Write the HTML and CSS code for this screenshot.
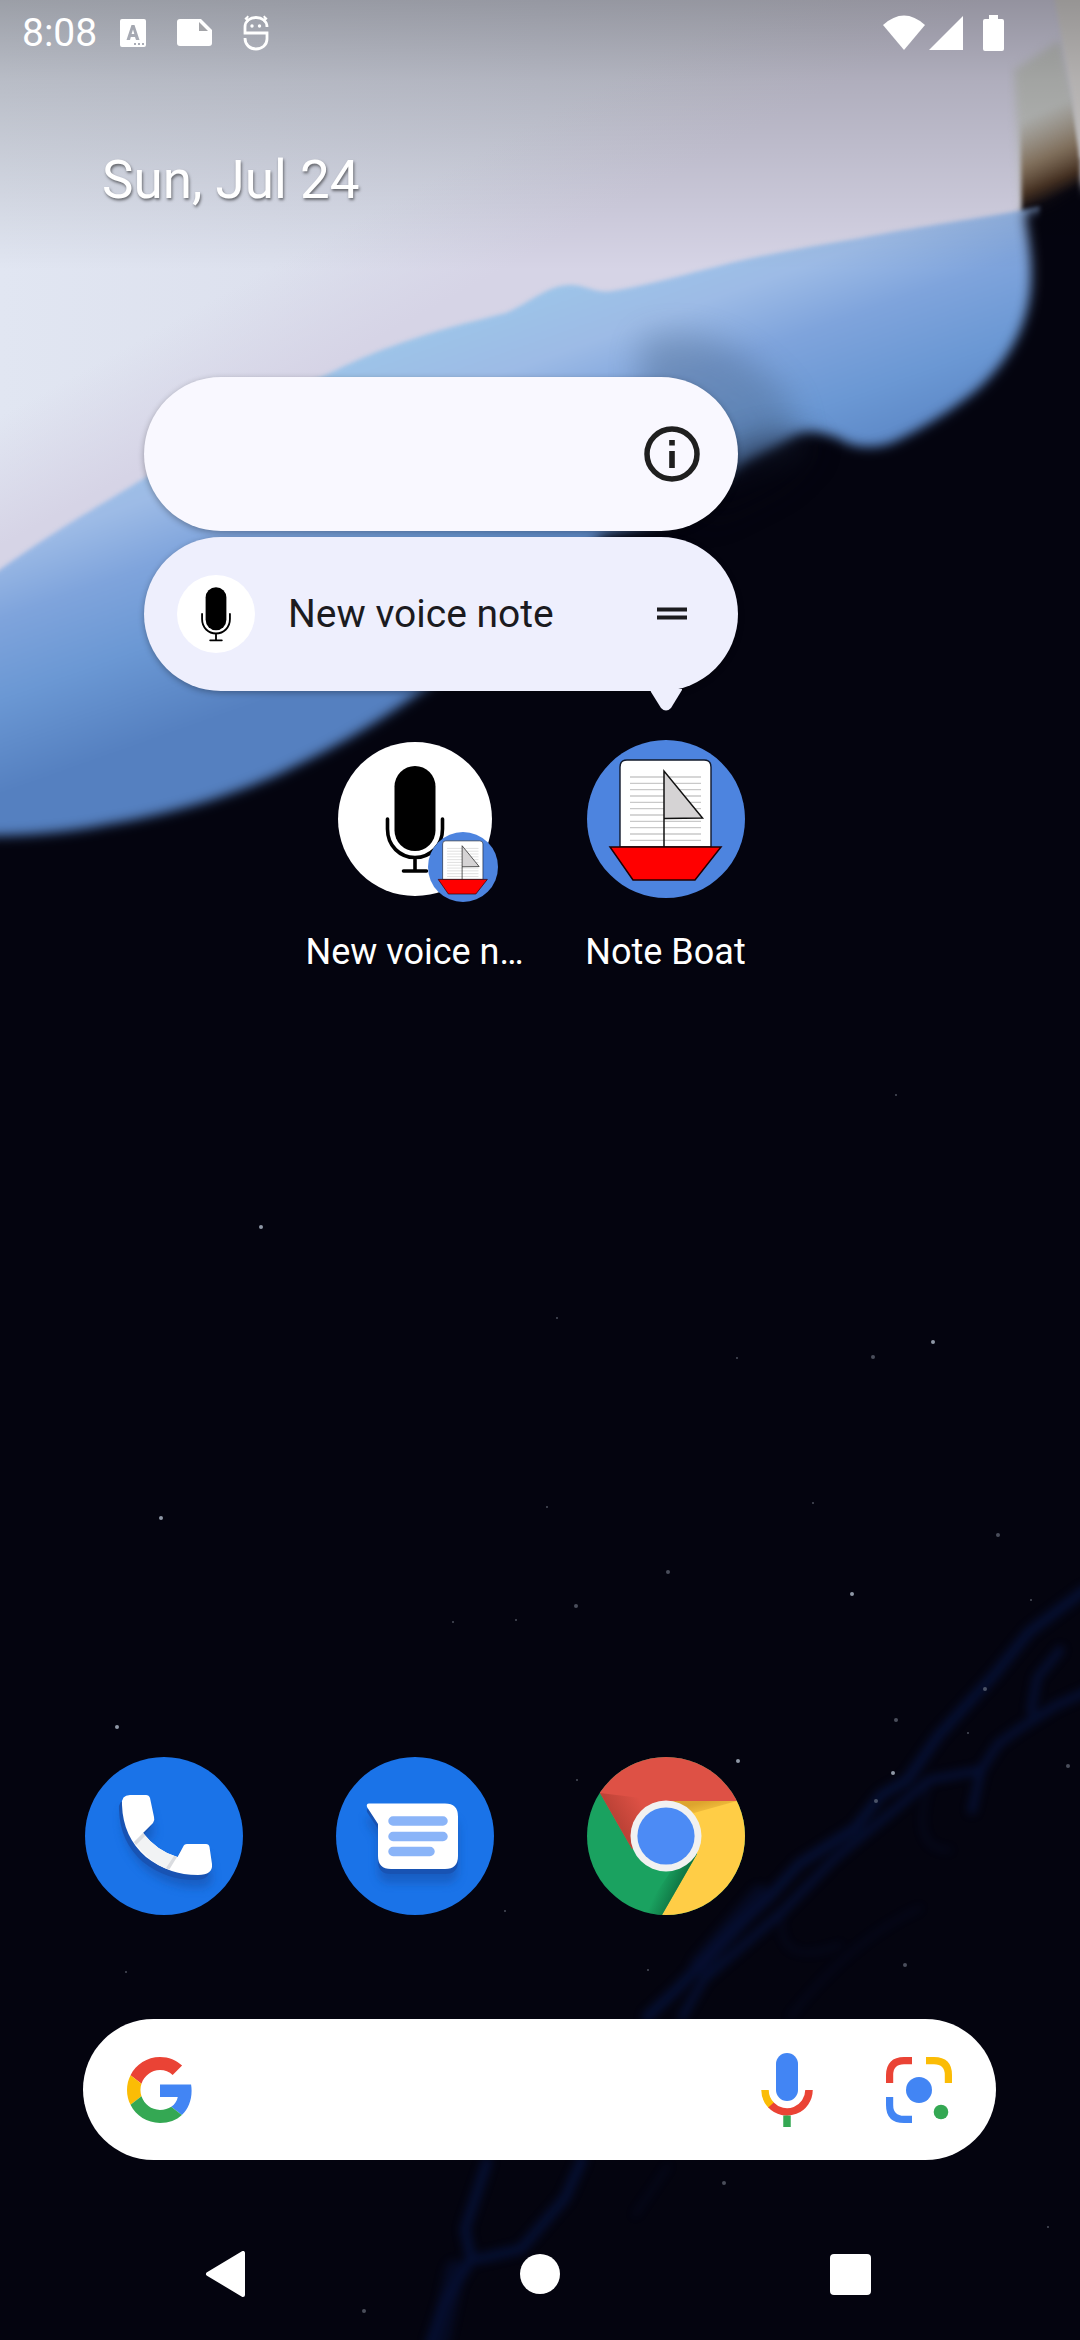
FILE: index.html
```html
<!DOCTYPE html>
<html lang="en">
<head>
<meta charset="utf-8">
<meta name="viewport" content="width=device-width, initial-scale=1">
<title>Home screen</title>
<link rel="stylesheet" href="styles.css">
</head>
<body>
<svg class="wallpaper" viewBox="0 0 1080 2340" preserveAspectRatio="xMidYMin slice" aria-hidden="true">
  <defs>
    <linearGradient id="sky" x1="0" y1="0" x2="1" y2="0">
      <stop offset="0" stop-color="#e1e6f2"/><stop offset=".5" stop-color="#d9dcea"/><stop offset="1" stop-color="#d6d5e2"/>
    </linearGradient>
    <linearGradient id="haze" gradientUnits="userSpaceOnUse" x1="120" y1="350" x2="175" y2="450">
      <stop offset="0" stop-color="#d6d4e6" stop-opacity="0"/><stop offset="1" stop-color="#d6d4e6"/>
    </linearGradient>
    <linearGradient id="wave" gradientUnits="userSpaceOnUse" x1="480" y1="320" x2="576" y2="590">
      <stop offset="0" stop-color="#9dc3e8"/><stop offset=".2" stop-color="#9dbbe6"/><stop offset=".42" stop-color="#7fa4dc"/><stop offset=".68" stop-color="#6b98d4"/><stop offset="1" stop-color="#5580c0"/>
    </linearGradient>
    <linearGradient id="smoke" gradientUnits="userSpaceOnUse" x1="1028" y1="118" x2="1062" y2="196">
      <stop offset="0" stop-color="#8a7358" stop-opacity="0"/><stop offset=".5" stop-color="#7d6347" stop-opacity=".75"/><stop offset=".8" stop-color="#4a3424"/><stop offset="1" stop-color="#0c0a12"/>
    </linearGradient>
    <linearGradient id="scrim" x1="0" y1="0" x2="0" y2="1">
      <stop offset="0" stop-color="#000" stop-opacity=".31"/><stop offset=".3" stop-color="#000" stop-opacity=".18"/><stop offset="1" stop-color="#000" stop-opacity="0"/>
    </linearGradient>
    <filter id="soft2" x="-10%" y="-10%" width="120%" height="120%" color-interpolation-filters="sRGB"><feGaussianBlur stdDeviation="2"/></filter>
    <filter id="soft3" x="-10%" y="-10%" width="120%" height="120%" color-interpolation-filters="sRGB"><feGaussianBlur stdDeviation="4"/></filter>
    <filter id="soft6" x="-10%" y="-10%" width="120%" height="120%" color-interpolation-filters="sRGB"><feGaussianBlur stdDeviation="6"/></filter>
    <filter id="soft12" x="-60%" y="-60%" width="220%" height="220%" color-interpolation-filters="sRGB"><feGaussianBlur stdDeviation="16"/></filter>
  </defs>
  <rect width="1080" height="2340" fill="#04040f"/>
  <rect width="1080" height="600" fill="url(#sky)"/>
  <rect width="1080" height="600" fill="url(#haze)"/>
  <path d="M1014 70L1060 40L1080 120V220H1022Z" fill="#c6c8c6" filter="url(#soft3)"/>
  <path d="M1020 90L1067 76L1080 150V222H1022Z" fill="url(#smoke)" filter="url(#soft2)"/>
  <path d="M1052 -15H1100V158L1080 158L1073 100Z" fill="#dad7d6" filter="url(#soft2)"/>
  <path d="M-20 584C60 526 90 512 138 482C210 438 270 398 324 376C360 358 380 350 413 339C450 326 480 320 506 313C522 306 535 296 551 289C562 285 569 284 580 286C592 289 600 293 613 291C650 285 690 273 723 265C770 253 815 246 861 238C920 226 970 220 1040 207V860H-20Z" fill="url(#wave)" filter="url(#soft2)"/>
  <path d="M1025 212C1026 232 1032 246 1031 282C1029 340 990 382 964 400C940 418 915 432 902 438C882 450 855 450 838 438C820 432 806 428 790 438C770 450 755 456 742 464C730 474 715 490 700 504C680 524 630 528 603 535C540 590 500 640 413 697C370 728 330 750 275 776C220 800 160 816 110 824C60 834 20 836 -30 836V900H1120V168L1082 184L1048 206Z" fill="#04040f" filter="url(#soft6)"/>
  <path d="M640 340C700 320 750 350 790 400L800 450L700 480L640 440Z" fill="#3c5470" opacity=".3" filter="url(#soft12)"/>
  <path d="M720 460C750 440 780 430 815 444L780 480L700 520Z" fill="#04040f" opacity=".5" filter="url(#soft12)"/>
  <rect y="850" width="1080" height="1490" fill="#04040f"/>
  <g fill="none" stroke="#061136" stroke-linecap="round" stroke-linejoin="round" filter="url(#soft3)" opacity=".9">
    <path d="M1085 1590L1029 1632L994 1675L938 1736L907 1780L881 1795L855 1828L799 1864L769 1897L730 1933L677 1989L647 2017" stroke-width="10"/>
    <path d="M1090 1690L1055 1706L1020 1728L998 1744L981 1770L972 1810M1031 1711L1037 1678L1060 1650M981 1770L929 1780L894 1810L834 1859L782 1912L704 1979L682 2017" stroke-width="8"/>
    <path d="M582 2160L565 2198L521 2249L478 2259M487 2162L465 2229L471 2259L443 2305L430 2345" stroke-width="10"/>
    <path d="M930 1780Q908 1850 950 1850M782 1912Q775 1970 840 1945M920 1908Q850 1940 790 2017M668 2166L635 2215" stroke-width="3" opacity=".6"/>
    <path d="M455 2270L440 2340M760 1895L700 1965" stroke-width="20" opacity=".6"/>
  </g>
  <g fill="#8f98a6">
    <circle cx="261" cy="1227" r="2"/><circle cx="161" cy="1518" r="2"/><circle cx="852" cy="1594" r="2"/><circle cx="117" cy="1727" r="2"/><circle cx="738" cy="1761" r="2"/><circle cx="933" cy="1342" r="2"/><circle cx="893" cy="1773" r="2"/>
    <g opacity=".5">
      <circle cx="873" cy="1357" r="2"/><circle cx="737" cy="1358" r="1"/><circle cx="998" cy="1535" r="2"/><circle cx="813" cy="1503" r="1"/><circle cx="668" cy="1572" r="2"/><circle cx="576" cy="1606" r="2"/><circle cx="896" cy="1720" r="2"/><circle cx="985" cy="1689" r="2"/><circle cx="1068" cy="1766" r="2"/><circle cx="1031" cy="1600" r="1"/><circle cx="968" cy="1733" r="1"/><circle cx="876" cy="1801" r="2"/><circle cx="905" cy="1965" r="2"/><circle cx="724" cy="2183" r="2"/><circle cx="516" cy="1620" r="1"/><circle cx="453" cy="1622" r="1"/><circle cx="577" cy="1780" r="1"/><circle cx="505" cy="1911" r="1"/><circle cx="648" cy="1970" r="1"/><circle cx="1048" cy="2227" r="1"/><circle cx="364" cy="2311" r="2"/><circle cx="557" cy="1318" r="1"/><circle cx="896" cy="1095" r="1"/><circle cx="126" cy="1972" r="1"/><circle cx="547" cy="1507" r="1"/>
    </g>
  </g>
  <rect width="1080" height="270" fill="url(#scrim)"/>
</svg>

<svg class="symbols" aria-hidden="true">
  <symbol id="boat" viewBox="0 0 158 158">
    <circle cx="79" cy="79" r="79" fill="#4d84df"/>
    <path d="M33 107V27Q33 20 40 20H117Q124 20 124 27V107Z" fill="#fff" stroke="#10182a" stroke-width="1.4"/>
    <path d="M43 37H114M43 43.400H114M43 49.700H114M43 56H114M43 62.400H114M43 68.700H114M43 75H114M43 81.400H114M43 87.700H114M43 94H114M43 100.400H114" stroke="#c9c9c9" stroke-width="1.300"/>
    <path d="M77 107V31L115.500 78L77 78.500" fill="#d5d3d4" stroke="#111" stroke-width="1.500"/>
    <path d="M23 107H134L108 140H46Z" fill="#f00" stroke="#200" stroke-width="1.500"/>
  </symbol>
  <symbol id="voice" viewBox="2 2 154 154">
    <circle cx="79" cy="79" r="77" fill="#fff"/>
    <rect x="58.500" y="26" width="41" height="85" rx="20.500"/>
    <path d="M51.500 79V89C51.500 106 64 117.500 79 117.500S106.500 106 106.500 89V79M79 118V131M67.500 131H90.500" fill="none" stroke="#000" stroke-width="3.600" stroke-linecap="round"/>
  </symbol>
</svg>

<div class="screen">
  <header class="status">
    <span class="clock">8:08</span>
    <svg width="26" height="28" viewBox="0 0 26 28"><path fill="#fff" fill-rule="evenodd" d="M2 0H24Q26 0 26 2V26Q26 28 24 28H2Q0 28 0 26V2Q0 0 2 0ZM11.500 6L6.500 21H10L10.800 18H15L16 21H19.500L14.500 6ZM13 10.500L14.300 15H11.600ZM14 24V26H16V24ZM18 24V26H20V24ZM22 24V26H24V24Z"/></svg>
    <svg class="note" width="35" height="28" viewBox="0 0 35 28"><path fill="#fff" d="M3 0H24L35 11V24Q35 27 32 27H3Q0 27 0 24V3Q0 0 3 0Z"/><path fill="#a3a4a8" d="M22 3V12H31Z"/></svg>
    <svg width="26" height="36" viewBox="0 0 26 36"><g fill="none" stroke="#fff" stroke-width="2.800"><path d="M24 12C24 6 19 2.500 13 2.500S2 6 2 12V18H24V24C24 30 19 34 13 34S2 30 2 23"/><path d="M2 3L6 6M24 3L20 6M5 1L3 5M21 1L23 5" stroke-width="2"/></g><circle cx="9" cy="11" r="1.700" fill="#fff"/><circle cx="16.500" cy="11" r="1.700" fill="#fff"/></svg>
    <div class="signals">
      <svg width="42" height="36" viewBox="0 0 42 36"><path fill="#fff" d="M0 10Q21 -9 42 10L21 35Z"/></svg>
      <svg width="34" height="36" viewBox="0 0 34 36"><path fill="#fff" d="M34 1V35H0Z"/></svg>
      <svg class="battery" width="21" height="36" viewBox="0 0 21 36"><path fill="#fff" d="M6 0H15V4H19Q21 4 21 6V34Q21 36 19 36H2Q0 36 0 34V6Q0 4 2 4H6Z"/></svg>
    </div>
  </header>

  <main class="workspace">
    <p class="date">Sun, Jul 24</p>
    <div class="grid apps">
      <a class="app voice-app" href="#voice-note">
        <span class="icon"><svg class="disc" width="154" height="154"><use href="#voice"/></svg><svg class="badge" width="70" height="70"><use href="#boat"/></svg></span>
        <span class="label">New voice n…</span>
      </a>
      <div class="anchor">
        <a class="app" href="#note-boat">
          <span class="icon"><svg width="158" height="158"><use href="#boat"/></svg></span>
          <span class="label">Note Boat</span>
        </a>
        <div class="popup">
          <div class="card system">
            <button class="plain" aria-label="App info"><svg width="56" height="56" viewBox="0 0 56 56"><circle cx="28" cy="28" r="25" fill="none" stroke="#1f1f1f" stroke-width="5.500"/><path d="M25.200 14H30.800V19.500H25.200ZM25.200 25H30.800V42H25.200Z" fill="#1f1f1f"/></svg></button>
          </div>
          <button class="card shortcut">
            <svg width="78" height="78"><use href="#voice"/></svg>
            <span class="shortcut-name">New voice note</span>
            <svg width="56" height="56" viewBox="0 0 56 56"><path d="M13 21.500H43V25.500H13ZM13 29.500H43V33.500H13Z" fill="#1b1b1f"/></svg>
          </button>
          <svg class="arrow" width="32" height="22" viewBox="0 0 32 22"><path d="M0 0H32V1L21 19Q16 24 11 19L1 3Z" fill="#eeeffd"/></svg>
        </div>
      </div>
    </div>
  </main>

  <nav class="grid dock" aria-label="Favorites">
    <a class="app" href="#phone" aria-label="Phone">
      <svg width="158" height="158" viewBox="0 0 158 158">
        <defs><filter id="drop" x="-30%" y="-30%" width="160%" height="170%"><feGaussianBlur stdDeviation="5"/></filter>
        <path id="handset" d="M37 48Q36 38 45 38H61Q64 38 65 41L69 60Q70 63 68 66L58 76Q72 94 92.500 100L98 90Q99 87 102 87H121Q124 87 124.500 90L127 107Q128 118 113 118Q84 118 61 100Q38 80 37 48Z"/></defs>
        <circle cx="79" cy="79" r="79" fill="#1a73e8"/>
        <use href="#handset" y="13" fill="#174ea6" opacity=".55" filter="url(#drop)"/>
        <use href="#handset" x="-3" y="5" fill="#1853b3"/>
        <use href="#handset" fill="#fff"/>
        <path d="M58 76Q72 94 92 100L82 112Q65 106 49 85Z" fill="#f1f3f4"/>
        <path d="M58 76L60 79L51 88L49 85ZM92 100L89 99L81 111L84 113Z" fill="#dadce0"/>
      </svg>
    </a>
    <a class="app" href="#messages" aria-label="Messages">
      <svg width="158" height="158" viewBox="0 0 158 158">
        <defs><path id="bubble" d="M33 46.500H109Q122 46.500 122 59.500V99Q122 112 109 112H55Q42 112 42 99V67L31 50Q30 46.500 33 46.500Z"/></defs>
        <circle cx="79" cy="79" r="79" fill="#1a73e8"/>
        <use href="#bubble" y="14" fill="#174ea6" opacity=".55" filter="url(#drop)"/>
        <use href="#bubble" y="5" fill="#1853b3"/>
        <use href="#bubble" fill="#fff"/>
        <path d="M57 64H107M57 79.500H107M57 94.500H94" stroke="#8ab4f8" stroke-width="9.500" stroke-linecap="round"/>
      </svg>
    </a>
    <a class="app" href="#chrome" aria-label="Chrome">
      <svg width="158" height="158" viewBox="0 0 158 158">
        <defs>
          <clipPath id="round"><circle cx="79" cy="79" r="79"/></clipPath>
          <linearGradient id="gr" gradientUnits="userSpaceOnUse" x1="32" y1="66" x2="58" y2="50"><stop offset="0" stop-color="#b53f33" stop-opacity=".8"/><stop offset="1" stop-color="#b53f33" stop-opacity="0"/></linearGradient>
          <linearGradient id="gy" gradientUnits="userSpaceOnUse" x1="120" y1="44" x2="124" y2="60"><stop offset="0" stop-color="#d49a28" stop-opacity=".8"/><stop offset="1" stop-color="#d49a28" stop-opacity="0"/></linearGradient>
          <linearGradient id="gg" gradientUnits="userSpaceOnUse" x1="94" y1="127" x2="76" y2="119"><stop offset="0" stop-color="#0d6b3d" stop-opacity=".8"/><stop offset="1" stop-color="#0d6b3d" stop-opacity="0"/></linearGradient>
        </defs>
        <g clip-path="url(#round)">
          <rect width="158" height="158" fill="#1aa260"/>
          <path d="M79 44H158V158H75L110 97Z" fill="#ffcd46"/>
          <path d="M13 36L0 0H158V44H79L45 92Z" fill="#de5145"/>
          <path d="M13 36L79 44L45 92Z" fill="url(#gr)"/>
          <path d="M79 44H150L107 56Z" fill="url(#gy)"/>
          <path d="M75 158L110 97L84 114L54 158Z" fill="url(#gg)"/>
        </g>
        <circle cx="79" cy="79" r="35.500" fill="#f1f1f1"/>
        <circle cx="79" cy="79" r="28.600" fill="#4c8bf5"/>
      </svg>
    </a>
  </nav>

  <form class="search" role="search">
    <svg width="66" height="66" viewBox="0 0 48 48">
      <path fill="#4285f4" d="M46.980 24.550c0-1.570-.15-3.090-.38-4.550H24v9.020h12.940c-.58 2.960-2.260 5.480-4.780 7.180l7.730 6c4.510-4.180 7.090-10.360 7.090-17.650z"/>
      <path fill="#ea4335" d="M24 9.500c3.540 0 6.710 1.220 9.210 3.600l6.850-6.850C35.900 2.380 30.470 0 24 0 14.620 0 6.510 5.380 2.560 13.220l7.980 6.190C12.430 13.720 17.740 9.500 24 9.500z"/>
      <path fill="#fbbc05" d="M10.530 28.590c-.48-1.450-.76-2.990-.76-4.590s.27-3.140.76-4.590l-7.980-6.190C.92 16.460 0 20.120 0 24c0 3.880.92 7.540 2.560 10.780l7.970-6.190z"/>
      <path fill="#34a853" d="M24 48c6.480 0 11.930-2.130 15.890-5.810l-7.730-6c-2.150 1.450-4.920 2.300-8.160 2.300-6.260 0-11.570-4.220-13.470-9.910l-7.980 6.190C6.510 42.620 14.620 48 24 48z"/>
    </svg>
    <input class="query" type="text" aria-label="Search">
    <button class="plain" type="button" aria-label="Voice search"><svg width="74" height="74" viewBox="0 0 74 74"><rect x="26" y="0" width="22" height="48" rx="11" fill="#4285f4"/><g fill="none" stroke-width="7.500"><path d="M15 37A22 22 0 0 0 21.500 52.500" stroke="#fbbc05"/><path d="M21 52A22 22 0 0 0 59 37" stroke="#ea4335"/><path d="M37 62.500V74" stroke="#34a853"/></g></svg></button>
    <button class="plain" type="button" aria-label="Search with camera"><svg width="66" height="66" viewBox="0 0 66 66"><g fill="none" stroke-width="7.200"><path d="M3.600 26V18Q3.600 3.600 18 3.600H26" stroke="#ea4335"/><path d="M40 3.600H48Q62.400 3.600 62.400 18V26" stroke="#fbbc05"/><path d="M3.600 40V48Q3.600 62.400 18 62.400H26" stroke="#4285f4"/></g><circle cx="33" cy="33" r="13" fill="#4285f4"/><circle cx="55" cy="55" r="7.300" fill="#34a853"/></svg></button>
  </form>

  <nav class="system-nav" aria-label="System navigation">
    <button class="plain" aria-label="Back"><svg width="46" height="46" viewBox="0 0 46 46"><path d="M38 2V44L3 23Z" fill="#fff" stroke="#fff" stroke-width="4" stroke-linejoin="round"/></svg></button>
    <button class="plain" aria-label="Home"><svg width="46" height="46" viewBox="0 0 46 46"><circle cx="23" cy="23" r="20" fill="#fff"/></svg></button>
    <button class="plain" aria-label="Recent apps"><svg width="46" height="46" viewBox="0 0 46 46"><rect x="1" y="3" width="41" height="41" rx="4" fill="#fff"/></svg></button>
  </nav>
</div>
</body>
</html>
```
FILE: styles.css
```css
* {
  box-sizing: border-box;
}

body {
  margin: 0;
  background: #04040f;
  color: #fff;
  font-family: Roboto, "Noto Sans", sans-serif;
}

svg {
  display: block;
  flex: none;
}

a {
  color: inherit;
  text-decoration: none;
}

button {
  border: 0;
  padding: 0;
  background: none;
  color: inherit;
  font: inherit;
}

.wallpaper {
  position: absolute;
  inset: 0;
  width: 100%;
  height: 100%;
}

.symbols {
  position: absolute;
  width: 0;
  height: 0;
}

.screen {
  position: relative;
  display: flex;
  flex-direction: column;
  min-height: 100vh;
}

/* Status bar */
.status {
  display: flex;
  align-items: center;
  height: 66px;
  padding: 0 76px 0 22px;
}

.clock {
  margin-right: 23px;
  font-size: 39px;
  line-height: 48px;
}

.note {
  margin: 0 31px;
}

.signals {
  display: flex;
  align-items: center;
  gap: 4px;
  margin-left: auto;
}

.battery {
  margin-left: 16px;
}

/* Home page */
.workspace {
  padding-top: 82px;
}

.date {
  margin: 0;
  padding-left: 102px;
  font-size: 53px;
  line-height: 64px;
  text-shadow: 1px 2px 3px rgb(0 0 0 / 50%);
}

.grid {
  display: grid;
  grid-template-columns: repeat(4, 1fr);
  padding: 0 38px;
}

.apps {
  margin-top: 528px;
}

.app {
  display: flex;
  flex-direction: column;
  align-items: center;
}

.voice-app {
  grid-column: 2;
}

.icon {
  position: relative;
  display: flex;
  align-items: center;
  justify-content: center;
  width: 158px;
  height: 158px;
}

.badge {
  position: absolute;
  right: -4px;
  bottom: -4px;
}

.label {
  margin-top: 32px;
  font-size: 36px;
  line-height: 44px;
  white-space: nowrap;
  text-shadow: 0 1px 2px rgb(0 0 0 / 50%);
}

.anchor {
  position: relative;
}

/* Long-press menu */
.popup {
  position: absolute;
  right: 53px;
  bottom: calc(100% + 49px);
  display: flex;
  flex-direction: column;
  gap: 6px;
  width: 594px;
}

.card {
  display: flex;
  align-items: center;
  height: 154px;
  padding: 0 38px 0 33px;
  border-radius: 77px;
  color: #1b1b1f;
  box-shadow: 0 2px 6px rgb(0 0 0 / 30%);
}

.system {
  justify-content: flex-end;
  background: #f9f8ff;
}

.shortcut {
  background: #eeeffd;
}

.shortcut-name {
  flex: 1;
  padding-left: 33px;
  font-size: 39px;
  line-height: 48px;
  text-align: left;
}

.arrow {
  position: absolute;
  top: calc(100% - 2px);
  right: 56px;
}

/* Dock, search and navigation */
.dock {
  margin-top: auto;
}

.search {
  display: flex;
  align-items: center;
  height: 141px;
  margin: 104px 84px 48px 83px;
  padding: 0 44px;
  border-radius: 71px;
  background: #fff;
}

.query {
  flex: 1;
  min-width: 0;
  border: 0;
  outline: 0;
  background: none;
  color: #1b1b1f;
  font: inherit;
  font-size: 36px;
}

.search .plain + .plain {
  margin-left: 62px;
}

.system-nav {
  display: flex;
  align-items: center;
  justify-content: center;
  gap: 266px;
  height: 132px;
}
```
